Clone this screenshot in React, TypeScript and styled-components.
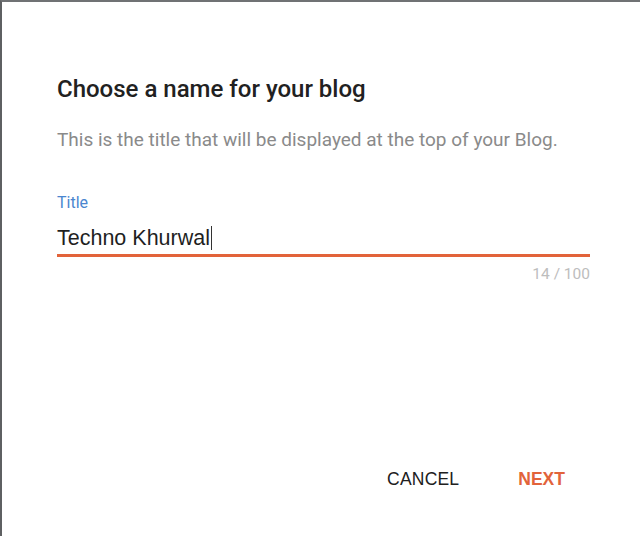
import React from "react";
import styled, { createGlobalStyle } from "styled-components";

const GlobalStyle = createGlobalStyle`
  html, body {
    margin: 0;
    padding: 0;
    background: #ffffff;
  }
`;

const Frame = styled.div`
  width: 640px;
  height: 536px;
  box-sizing: border-box;
  border-top: 2px solid #707274;
  border-left: 2px solid #5e6062;
  background: #ffffff;
  overflow: hidden;
`;

const Dialog = styled.div`
  display: flex;
  flex-direction: column;
  height: 100%;
  box-sizing: border-box;
  padding: 72px 50px 0 55px;
`;

const Heading = styled.h2`
  margin: 0;
  font-family: Roboto, "Noto Sans", sans-serif;
  font-weight: 500;
  font-size: 24px;
  line-height: 30px;
  color: #212121;
`;

const Subtitle = styled.p`
  margin: 24px 0 0;
  font-family: Roboto, "Noto Sans", sans-serif;
  font-size: 19px;
  line-height: 24px;
  color: #8a8a8a;
`;

const Field = styled.div`
  display: flex;
  flex-direction: column;
  margin-top: 41px;
`;

const Label = styled.label`
  font-family: Roboto, "Noto Sans", sans-serif;
  font-size: 16px;
  line-height: 20px;
  color: #4a86cf;
`;

const Input = styled.div`
  display: flex;
  align-items: center;
  margin-top: 1px;
  height: 32px;
  padding-top: 8px;
  border-bottom: 3px solid #e2633a;
  font-family: "Liberation Sans", Arial, sans-serif;
  font-size: 21.5px;
  color: #1f1f1f;
`;

const Caret = styled.span`
  display: inline-block;
  width: 1.5px;
  height: 24px;
  margin-left: 1px;
  background: #333;
`;

const Counter = styled.div`
  margin-top: 8px;
  text-align: right;
  font-family: Roboto, "Noto Sans", sans-serif;
  font-size: 15.5px;
  line-height: 18px;
  color: #bdbdbd;
`;

const Actions = styled.div`
  display: flex;
  justify-content: flex-end;
  gap: 59px;
  margin-top: auto;
  padding: 0 25px 46px 0;
`;

const ActionButton = styled.button<{ $primary?: boolean }>`
  border: none;
  background: none;
  padding: 0;
  font-family: "Liberation Sans", Arial, sans-serif;
  font-size: 17.5px;
  font-weight: ${(p) => (p.$primary ? 700 : 400)};
  letter-spacing: ${(p) => (p.$primary ? "0" : "0.2px")};
  color: ${(p) => (p.$primary ? "#e2633a" : "#202020")};
  cursor: pointer;
`;

export default function App() {
  return (
    <>
      <GlobalStyle />
      <Frame>
        <Dialog>
          <Heading>Choose a name for your blog</Heading>
          <Subtitle>This is the title that will be displayed at the top of your Blog.</Subtitle>
          <Field>
            <Label>Title</Label>
            <Input>
              Techno Khurwal
              <Caret />
            </Input>
            <Counter>14 / 100</Counter>
          </Field>
          <Actions>
            <ActionButton>CANCEL</ActionButton>
            <ActionButton $primary>NEXT</ActionButton>
          </Actions>
        </Dialog>
      </Frame>
    </>
  );
}
